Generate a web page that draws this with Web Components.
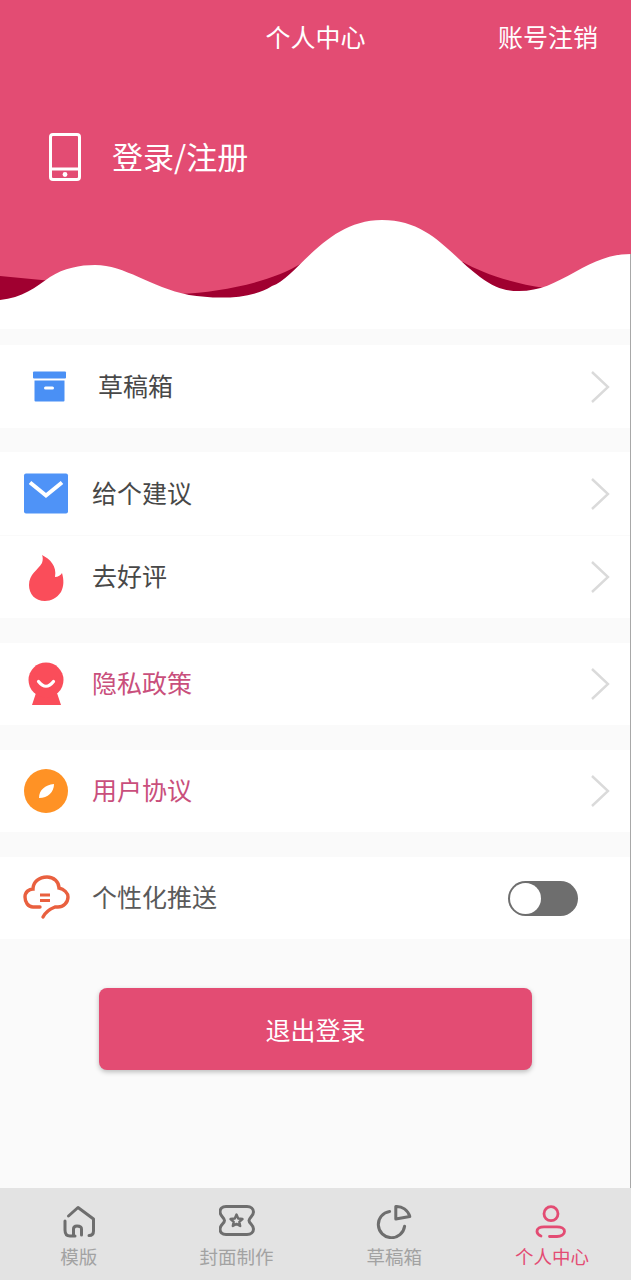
<!DOCTYPE html>
<html lang="zh">
<head>
<meta charset="utf-8">
<title>个人中心</title>
<style>
  html, body { margin: 0; padding: 0; }
  body { font-family: "Noto Sans CJK SC", "Noto Sans", sans-serif; background: #fafafa; }
</style>
</head>
<body>
<profile-page>
  <profile-hero slot="hero"></profile-hero>

  <menu-row indent style="margin-top:16px;height:83px">
    <svg slot="icon" width="52" height="52" viewBox="0 0 52 52">
      <rect x="13" y="10.5" width="33" height="7" rx="1" fill="#4a90f5"/>
      <path d="M14.5 19.5h30v20a1 1 0 0 1-1 1h-28a1 1 0 0 1-1-1z" fill="#4a90f5"/>
      <rect x="24" y="25.5" width="10" height="3" rx="1.5" fill="#fff"/>
    </svg>
    草稿箱
  </menu-row>

  <menu-row style="margin-top:24px;height:83px">
    <svg slot="icon" width="52" height="52" viewBox="0 0 52 52">
      <rect x="4" y="5.5" width="44" height="40" rx="2" fill="#4f93f7"/>
      <path d="M10 14.5 26 27.5 42 14.5" fill="none" stroke="#fff" stroke-width="4"/>
    </svg>
    给个建议
  </menu-row>
  <menu-row style="margin-top:1px">
    <svg slot="icon" width="52" height="52" viewBox="0 0 52 52">
      <path d="M22 4C30 8 37 15 35 26C38 26 41 24 42 22C44 29 44 35 41 41C37 47 31 50 25 50C15 50 9 43 9 34C9 23 18 19 22 12C23 9 23 6 22 4Z" fill="#fa4d5a"/>
    </svg>
    去好评
  </menu-row>

  <menu-row accent style="margin-top:25px">
    <svg slot="icon" width="52" height="52" viewBox="0 0 52 52">
      <path d="M17 32h19l5 15H12z" fill="#fa4d5a"/>
      <circle cx="26" cy="22" r="17.5" fill="#fa4d5a"/>
      <path d="M18.5 23.5Q26 33 33.5 23.5" fill="none" stroke="#fff" stroke-width="3.2" stroke-linecap="round"/>
    </svg>
    隐私政策
  </menu-row>

  <menu-row accent style="margin-top:25px">
    <svg slot="icon" width="52" height="52" viewBox="0 0 52 52">
      <circle cx="26" cy="26" r="22" fill="#ff9225"/>
      <path d="M19 33C19 25 25 20 34 19C34 27 28 33 19 33Z" fill="#fff"/>
    </svg>
    用户协议
  </menu-row>

  <menu-row plain style="margin-top:25px">
    <svg slot="icon" width="52" height="52" viewBox="0 0 52 52">
      <path d="M20 35H13C8 35 5 30 5 25C5 20 9 17 13 17C13 10 19 5 27 5C34 5 39 10 39 16C44 17 48 21 48 25C48 31 43 35 38 35H35C30 37 25 41 23 45" fill="none" stroke="#e9603f" stroke-width="3.4" stroke-linecap="round"/>
      <path d="M20 23h10M20 28.5h10" stroke="#e9603f" stroke-width="3"/>
    </svg>
    个性化推送
    <toggle-switch slot="end"></toggle-switch>
  </menu-row>

  <logout-button>退出登录</logout-button>

  <tab-bar slot="tabs">
    <tab-item>
      <svg slot="icon" width="36" height="36" viewBox="0 0 36 36">
        <path d="M14 33H9C6 33 4 31 4 27V18" fill="none" stroke="#6e6e6e" stroke-width="3" stroke-linecap="round"/>
        <path d="M7.5 13 17 4.5 32.5 16V28C32.5 31 30.5 32.5 28 32.5" fill="none" stroke="#6e6e6e" stroke-width="3" stroke-linecap="round" stroke-linejoin="round"/>
        <path d="M12.5 32V26C12.5 23.5 14 23 16 23C19 23 20.5 24 20.5 26V32" fill="none" stroke="#6e6e6e" stroke-width="3" stroke-linecap="round"/>
      </svg>
      模版
    </tab-item>
    <tab-item>
      <svg slot="icon" width="36" height="36" viewBox="0 0 36 36">
        <path d="M7 3.5H28C32 3.5 34.5 6 34.5 9C34.5 13 30 14.5 30 17.5C30 20.5 34.5 22 34.5 26C34.5 29 32 31.5 28 31.5H7C3 31.5 1 29 1 26C1 22 5.5 20.5 5.5 17.5C5.5 14.5 1 13 1 9C1 6 3 3.5 7 3.5Z" fill="none" stroke="#6e6e6e" stroke-width="3"/>
        <path d="M17.5 11.5 19.2 15.5 23.5 16 20.3 18.8 21.2 23 17.5 20.9 13.8 23 14.7 18.8 11.5 16 15.8 15.5Z" fill="none" stroke="#6e6e6e" stroke-width="2.4" stroke-linejoin="round"/>
      </svg>
      封面制作
    </tab-item>
    <tab-item>
      <svg slot="icon" width="36" height="36" viewBox="0 0 36 36">
        <path d="M13.6 8.4A13.2 13.2 0 1 0 28.6 23.3" fill="none" stroke="#6e6e6e" stroke-width="3" stroke-linecap="round"/>
        <path d="M19.8 3.5V16L33.8 13.5C32 7 26 3 19.8 3.5Z" fill="none" stroke="#6e6e6e" stroke-width="3" stroke-linejoin="round"/>
      </svg>
      草稿箱
    </tab-item>
    <tab-item active>
      <svg slot="icon" width="36" height="36" viewBox="0 0 36 36">
        <circle cx="17" cy="10.7" r="7" fill="none" stroke="#e34c73" stroke-width="2.8"/>
        <path d="M7 33C4.5 32 3 30.5 3 28.5C3 25.5 6 23.8 10 23.8H23C27 23.8 30.5 25.5 30.5 28.5C30.5 31.5 27 33.5 23 33.5H15.5" fill="none" stroke="#e34c73" stroke-width="2.8" stroke-linecap="round"/>
      </svg>
      个人中心
    </tab-item>
  </tab-bar>
</profile-page>

<script>
class ProfilePage extends HTMLElement {
  constructor() {
    super();
    this.attachShadow({mode: 'open'});
    this.shadowRoot.innerHTML = `
      <style>
        :host { display: flex; flex-direction: column; height: 1280px; box-sizing: border-box; background: #fafafa; overflow: hidden; }
        .content { flex: 1; display: flex; flex-direction: column; border-right: 1px solid #a8a8a8; }
      </style>
      <slot name="hero"></slot>
      <div class="content"><slot></slot></div>
      <slot name="tabs"></slot>
    `;
  }
}
customElements.define('profile-page', ProfilePage);

class ProfileHero extends HTMLElement {
  constructor() {
    super();
    this.attachShadow({mode: 'open'});
    this.shadowRoot.innerHTML = `
      <style>
        :host { display: block; position: relative; height: 329px; background: #e34c73; color: #fff; overflow: hidden; }
        .top { display: grid; grid-template-columns: 1fr auto 1fr; align-items: center; height: 72px; font-size: 25px; }
        .title { grid-column: 2; }
        .logout { grid-column: 3; justify-self: end; padding-right: 33px; }
        .login { display: flex; align-items: center; gap: 30px; padding: 59px 0 0 48px; font-size: 31px; line-height: 50px; }
        .login svg { display: block; }
        .login span { padding-bottom: 2px; }
        .wave { position: absolute; left: 0; top: 200px; display: block; }
      </style>
      <div class="top">
        <span class="title">个人中心</span>
        <span class="logout">账号注销</span>
      </div>
      <div class="login">
        <svg width="34" height="50" viewBox="0 0 34 50">
          <rect x="2.5" y="2.5" width="29" height="45" rx="2.5" fill="none" stroke="#fff" stroke-width="3"/>
          <rect x="2.5" y="35.5" width="29" height="3" fill="#fff"/>
          <circle cx="17" cy="42.5" r="2.4" fill="#fff"/>
        </svg>
        <span>登录/注册</span>
      </div>
      <svg class="wave" width="631" height="129" viewBox="0 200 631 129">
        <path d="M0 276 52 281 180 294C220 292 270 283 302 263L463 262C480 272 510 283 545 288L631 300V329H0Z" fill="#a00030"/>
        <path d="M0 300C22 298 36 287 50 277C64 268 80 265 95 265C125 265 150 287 189 295C215 299 250 300 272 286C297 278 325 220 382 220C430 220 450 255 480 277C495 288 505 291 519 291C540 291 555 283 575 272C595 261 610 254 631 254V329H0Z" fill="#fff"/>
        <rect x="630" y="254" width="1" height="75" fill="#a8a8a8"/>
      </svg>
    `;
  }
}
customElements.define('profile-hero', ProfileHero);

// one settings line: icon, label, then a chevron or whatever is slotted as "end"
class MenuRow extends HTMLElement {
  constructor() {
    super();
    this.attachShadow({mode: 'open'});
    this.shadowRoot.innerHTML = `
      <style>
        :host { display: flex; align-items: center; height: 82px; box-sizing: border-box; background: #fff; padding: 0 20px; font-size: 25px; color: #484848; flex: none; }
        :host([accent]) { color: #c94f7c; }
        :host([plain]) { color: #5a5a5a; }
        :host([indent]) .label { margin-left: 26px; }
        :host([plain]) .chev { display: none; }
        .icon { display: flex; width: 52px; height: 52px; }
        .label { flex: 1; margin-left: 20px; padding-bottom: 4px; }
        .chev { display: block; }
        ::slotted([slot="end"]) { margin-right: 32px; }
      </style>
      <span class="icon"><slot name="icon"></slot></span>
      <span class="label"><slot></slot></span>
      <slot name="end"></slot>
      <svg class="chev" width="20" height="34" viewBox="0 0 20 34">
        <path d="M2 2 18 17 2 32" fill="none" stroke="#dadada" stroke-width="2.4"/>
      </svg>
    `;
  }
}
customElements.define('menu-row', MenuRow);

class ToggleSwitch extends HTMLElement {
  constructor() {
    super();
    this.attachShadow({mode: 'open'});
    this.shadowRoot.innerHTML = `
      <style>
        :host { display: flex; width: 70px; height: 35px; box-sizing: border-box; padding: 2px; border-radius: 18px; background: #6e6e6e; }
        .knob { width: 31px; height: 31px; border-radius: 50%; background: #fff; }
      </style>
      <div class="knob"></div>
    `;
  }
}
customElements.define('toggle-switch', ToggleSwitch);

class LogoutButton extends HTMLElement {
  constructor() {
    super();
    this.attachShadow({mode: 'open'});
    this.shadowRoot.innerHTML = `
      <style>
        :host { display: flex; align-items: center; justify-content: center; flex: none; width: 433px; height: 82px; margin: 49px 0 0 99px; border-radius: 8px; background: #e34c73; color: #fff; font-size: 25px; box-shadow: 0 2px 5px rgba(0,0,0,.25); }
      </style>
      <slot></slot>
    `;
  }
}
customElements.define('logout-button', LogoutButton);

class TabBar extends HTMLElement {
  constructor() {
    super();
    this.attachShadow({mode: 'open'});
    this.shadowRoot.innerHTML = `
      <style>
        :host { display: grid; grid-template-columns: repeat(4, 1fr); height: 92px; flex: none; background: #e3e3e3; }
      </style>
      <slot></slot>
    `;
  }
}
customElements.define('tab-bar', TabBar);

class TabItem extends HTMLElement {
  constructor() {
    super();
    this.attachShadow({mode: 'open'});
    this.shadowRoot.innerHTML = `
      <style>
        :host { display: flex; flex-direction: column; align-items: center; padding-top: 15px; font-size: 18.5px; line-height: 26px; color: #a2a2a2; }
        :host([active]) { color: #e34c73; }
        .icon { display: flex; height: 36px; margin-bottom: 4px; }
      </style>
      <span class="icon"><slot name="icon"></slot></span>
      <slot></slot>
    `;
  }
}
customElements.define('tab-item', TabItem);
</script>
</body>
</html>
